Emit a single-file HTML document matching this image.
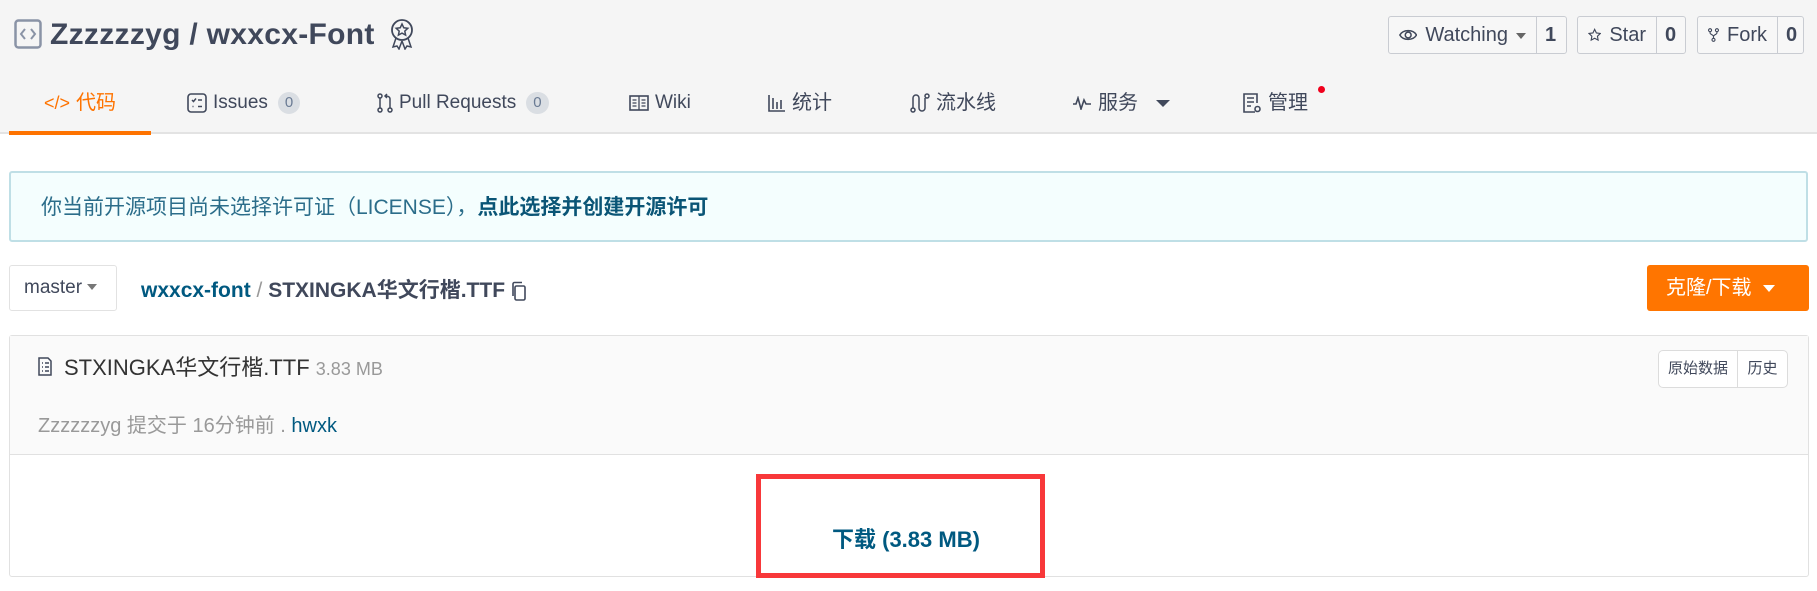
<!DOCTYPE html>
<html><head><meta charset="utf-8"><style>
*{box-sizing:border-box;margin:0;padding:0}
body{width:1817px;height:591px;background:#fff;font-family:"Liberation Sans","Noto Sans CJK SC",sans-serif;color:#40485b;position:relative;overflow:hidden}
.a{position:absolute;white-space:nowrap}
.hdr{position:absolute;left:0;top:0;width:1817px;height:134px;background:#f5f5f5;border-bottom:2px solid #e3e3e3}
.tab{position:absolute;top:89px;font-size:19px;line-height:28px;color:#40485b;display:flex;align-items:center;gap:6px}
.badge{display:inline-block;background:#dadee3;color:#6a7b94;border-radius:12px;font-size:15px;line-height:22px;padding:0 7px;margin-left:4px}
.btn{position:absolute;top:16px;height:38px;border:1px solid #c9ccd2;border-radius:3px;background:#f7f7f7;display:flex;align-items:center;font-size:20px;color:#40485b}
.btn .l{display:flex;align-items:center;gap:8px;padding:0 10px;height:100%;border-right:1px solid #c9ccd2}
.btn .r{padding:0 8px;font-weight:bold}
svg{display:block}
</style></head><body>
<div class="hdr"></div>
<svg class="a" style="left:14px;top:19px" width="28" height="30" viewBox="0 0 28 30"><rect x="1.5" y="1.5" width="25" height="27" rx="3" fill="none" stroke="#8a93a6" stroke-width="2.5"/><path d="M11 10l-4 5 4 5M17 10l4 5-4 5" fill="none" stroke="#8a93a6" stroke-width="2"/></svg>
<div class="a" style="left:50px;top:15px;font-size:30px;font-weight:bold;color:#40485b;line-height:40px;letter-spacing:0.3px">Zzzzzzyg / wxxcx-Font</div>
<svg class="a" style="left:389px;top:18px" width="26" height="32" viewBox="0 0 26 32"><circle cx="13" cy="12" r="10" fill="none" stroke="#40485b" stroke-width="1.8"/><path d="M13 6l1.8 3.8 4 .5-3 2.8.8 4-3.6-2-3.6 2 .8-4-3-2.8 4-.5z" fill="none" stroke="#40485b" stroke-width="1.5"/><path d="M7 20l-3 9 4-1 2 3 3-8M19 20l3 9-4-1-2 3-3-8" fill="none" stroke="#40485b" stroke-width="1.5"/></svg>

<div class="btn" style="left:1388px;width:179px"><div class="l" style="width:148px"><svg width="22" height="14" viewBox="0 0 22 14"><path d="M1 7C5 0 17 0 21 7 17 14 5 14 1 7z" fill="none" stroke="#40485b" stroke-width="1.8"/><circle cx="11" cy="7" r="3.5" fill="none" stroke="#40485b" stroke-width="1.8"/></svg>Watching<span style="border:5px solid transparent;border-top:6px solid #666;margin-top:6px"></span></div><div class="r">1</div></div>
<div class="btn" style="left:1577px;width:109px"><div class="l" style="width:79px"><svg width="20" height="20" viewBox="0 0 20 20"><path d="M10 1.5l2.6 5.4 5.9.8-4.3 4.1 1 5.9L10 14.9l-5.2 2.8 1-5.9L1.5 7.7l5.9-.8z" fill="none" stroke="#40485b" stroke-width="1.7"/></svg>Star</div><div class="r">0</div></div>
<div class="btn" style="left:1697px;width:107px"><div class="l" style="width:80px"><svg width="16" height="20" viewBox="0 0 16 20"><circle cx="3" cy="3" r="2.2" fill="none" stroke="#40485b" stroke-width="1.6"/><circle cx="13" cy="3" r="2.2" fill="none" stroke="#40485b" stroke-width="1.6"/><circle cx="8" cy="17" r="2.2" fill="none" stroke="#40485b" stroke-width="1.6"/><path d="M3 5v2c0 2 5 3 5 5v3M13 5v2c0 2-5 3-5 5" fill="none" stroke="#40485b" stroke-width="1.6"/></svg>Fork</div><div class="r">0</div></div>

<div class="tab" style="left:44px;color:#fe7300;font-size:20px"><span style="font-size:18px">&lt;/&gt;</span>代码</div>
<div class="a" style="left:9px;top:131px;width:142px;height:4px;background:#fe7300"></div>
<div class="tab" style="left:187px"><svg width="20" height="20" viewBox="0 0 20 20"><rect x="1" y="1" width="18" height="18" rx="3" fill="none" stroke="#40485b" stroke-width="1.6"/><path d="M5 7l1.5 1.5L9 5.5M11 7h4M5.5 13.5h1M11 13.5h4" fill="none" stroke="#40485b" stroke-width="1.5"/></svg>Issues<span class="badge">0</span></div>
<div class="tab" style="left:377px"><svg width="16" height="20" viewBox="0 0 16 20"><circle cx="3" cy="3" r="2" fill="none" stroke="#40485b" stroke-width="1.5"/><circle cx="3" cy="17" r="2" fill="none" stroke="#40485b" stroke-width="1.5"/><circle cx="13" cy="17" r="2" fill="none" stroke="#40485b" stroke-width="1.5"/><path d="M3 5v10M13 15V6c0-2-2-3-4-3M10 1L8 3l2 2" fill="none" stroke="#40485b" stroke-width="1.5"/></svg>Pull Requests<span class="badge">0</span></div>
<div class="tab" style="left:629px"><svg width="20" height="16" viewBox="0 0 20 16"><rect x="1" y="1" width="18" height="14" fill="none" stroke="#40485b" stroke-width="1.6"/><path d="M10 1v14M3.5 5h4M3.5 8h4M3.5 11h4M12.5 5h4M12.5 8h4M12.5 11h4" stroke="#40485b" stroke-width="1.3"/></svg>Wiki</div>
<div class="tab" style="left:768px;font-size:20px"><svg width="18" height="18" viewBox="0 0 18 18"><path d="M1 1v16h16M5 4v11M9 8v7M13 6v9" fill="none" stroke="#40485b" stroke-width="1.6"/></svg>统计</div>
<div class="tab" style="left:910px;font-size:20px"><svg width="20" height="20" viewBox="0 0 20 20"><circle cx="3" cy="17" r="2" fill="none" stroke="#40485b" stroke-width="1.5"/><circle cx="17" cy="3" r="2" fill="none" stroke="#40485b" stroke-width="1.5"/><path d="M3 15V5a3 3 0 016 0v10a3 3 0 006 0V5" fill="none" stroke="#40485b" stroke-width="1.5"/></svg>流水线</div>
<div class="tab" style="left:1072px;font-size:20px"><svg width="20" height="14" viewBox="0 0 20 14"><path d="M1 8h3l2-6 3 11 3-9 2 4h5" fill="none" stroke="#40485b" stroke-width="1.6"/></svg>服务<span style="border:7px solid transparent;border-top:7px solid #40485b;margin:8px 0 0 12px"></span></div>
<div class="tab" style="left:1242px;font-size:20px"><svg width="20" height="22" viewBox="0 0 20 22"><path d="M13 20H2V2h13v9" fill="none" stroke="#40485b" stroke-width="1.6"/><path d="M5 6h7M5 10h7M5 14h4" stroke="#40485b" stroke-width="1.5"/><circle cx="15.5" cy="17" r="2.5" fill="none" stroke="#40485b" stroke-width="1.6"/></svg>管理</div>
<div class="a" style="left:1318px;top:86px;width:7px;height:7px;border-radius:50%;background:#f0001c"></div>

<div class="a" style="left:9px;top:171px;width:1799px;height:71px;background:#f4fefe;border:2px solid #bfdfe6;border-radius:3px"></div>
<div class="a" style="left:41px;top:193px;font-size:21px;line-height:30px;color:#2b6d8a">你当前开源项目尚未选择许可证（LICENSE），<b style="color:#0a5576">点此选择并创建开源许可</b></div>

<div class="a" style="left:9px;top:265px;width:108px;height:46px;border:1px solid #e2e2e2;border-radius:3px;background:#fff;font-size:19px;line-height:44px;padding-left:14px;color:#40485b">master <span style="display:inline-block;border:5px solid transparent;border-top:6px solid #777;vertical-align:middle;margin-top:4px"></span></div>
<div class="a" style="left:141px;top:276px;font-size:21px;line-height:30px;font-weight:bold;color:#005980;display:flex;align-items:center">wxxcx-font<span style="font-weight:normal;color:#999">&nbsp;/&nbsp;</span><span style="color:#40485b">STXINGKA华文行楷.TTF</span><svg style="margin-left:6px" width="16" height="21" viewBox="0 0 16 21"><rect x="4" y="5" width="10" height="14" rx="1.5" fill="none" stroke="#40485b" stroke-width="1.6"/><path d="M2 15V3a1.5 1.5 0 011.5-1.5H11" fill="none" stroke="#40485b" stroke-width="1.6"/></svg></div>
<div class="a" style="left:1647px;top:265px;width:162px;height:46px;background:#ff7500;border-radius:3px;color:#fff;font-size:20px;line-height:46px;padding-left:19px">克隆/下载 <span style="display:inline-block;border:6px solid transparent;border-top:7px solid #fff;vertical-align:middle;margin:6px 0 0 6px"></span></div>

<div class="a" style="left:9px;top:335px;width:1800px;height:242px;border:1px solid #e1e1e1;border-radius:3px;background:#fff"></div>
<div class="a" style="left:10px;top:336px;width:1798px;height:119px;background:#fafafa;border-bottom:1px solid #e1e1e1"></div>
<svg class="a" style="left:38px;top:357px" width="14" height="19" viewBox="0 0 14 19"><path d="M1 1h9l3 3v14H1z" fill="none" stroke="#40485b" stroke-width="1.5"/><path d="M4 6h1M7 6h4M4 10h1M7 10h4M4 14h1M7 14h4" stroke="#40485b" stroke-width="1.5"/></svg>
<div class="a" style="left:64px;top:352px;font-size:22px;line-height:32px;color:#333">STXINGKA华文行楷.TTF <span style="font-size:18px;color:#999">3.83 MB</span></div>
<div class="a" style="left:38px;top:412px;font-size:20px;line-height:28px;color:#999">Zzzzzzyg 提交于 16分钟前 . <span style="color:#005980">hwxk</span></div>
<div class="a" style="left:1658px;top:350px;width:130px;height:38px;border:1px solid #dcdcdc;border-radius:5px;background:#fff;font-size:15px;line-height:36px;color:#40485b;display:flex"><span style="width:79px;text-align:center;border-right:1px solid #dcdcdc">原始数据</span><span style="flex:1;text-align:center">历史</span></div>

<div class="a" style="left:756px;top:474px;width:289px;height:104px;border:5px solid #f8383a"></div>
<div class="a" style="left:832px;top:525px;font-size:22px;line-height:30px;font-weight:bold;color:#005980">下载 (3.83 MB)</div>
</body></html>
